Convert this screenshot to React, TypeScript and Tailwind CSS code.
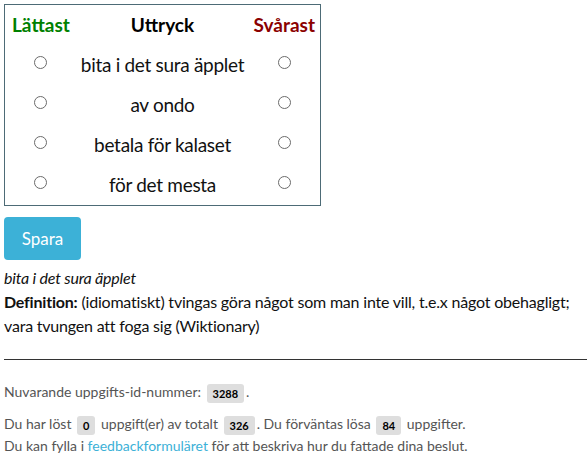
import React from 'react';

const rows = ['bita i det sura äpplet', 'av ondo', 'betala för kalaset', 'för det mesta'];

function Radio() {
  return (
    <span className="inline-block h-[13px] w-[13px] rounded-full border border-[#6b6b6b] bg-white" />
  );
}

function Code({ children }: { children: React.ReactNode }) {
  return (
    <code className="mx-[2px] inline-block rounded-[3px] bg-[#dedede] px-[6px] py-[3px] align-middle font-['Lato'] text-[11px] font-bold leading-[13px] text-black">
      {children}
    </code>
  );
}

export default function App() {
  return (
    <div className="min-h-screen bg-white p-[4px] pr-0 font-['Lato',sans-serif] text-[16px] text-[#111]">
      <div className="w-[317px] border border-[#4d6b76]">
        <div className="grid h-[40px] grid-cols-[74px_1fr_74px] items-center text-[19px] font-bold">
          <span className="pl-[7px] text-[#008000]">Lättast</span>
          <span className="text-center text-black">Uttryck</span>
          <span className="pr-[5px] text-right text-[#8b0000]">Svårast</span>
        </div>
        {rows.map((r) => (
          <div key={r} className="grid h-[40px] grid-cols-[74px_1fr_74px] items-center text-[19px] tracking-[-0.3px]">
            <span className="flex justify-center pr-[3px] pb-[5px]">
              <Radio />
            </span>
            <span className="whitespace-nowrap text-center">{r}</span>
            <span className="flex justify-center pl-[3px] pb-[5px]">
              <Radio />
            </span>
          </div>
        ))}
      </div>

      <button className="mt-[11px] h-[43px] w-[77px] rounded-[4px] bg-[#3cb1d7] text-[17px] text-white">
        Spara
      </button>

      <div className="mt-[6px] pr-[4px] leading-[24px] tracking-[-0.2px]">
        <p className="italic">bita i det sura äpplet</p>
        <p>
          <b>Definition:</b> (idiomatiskt) tvingas göra något som man inte vill, t.e.x något obehagligt; vara tvungen att foga sig (Wiktionary)
        </p>
      </div>

      <hr className="mt-[21px] border-t border-[#333]" />

      <div className="mt-[21px] text-[14px] leading-[21px] text-[#555]">
        <p>
          Nuvarande uppgifts-id-nummer: <Code>3288</Code>.
        </p>
        <p className="mt-[10px]">
          Du har löst <Code>0</Code> uppgift(er) av totalt <Code>326</Code>. Du förväntas lösa <Code>84</Code> uppgifter.
        </p>
        <p>
          Du kan fylla i <a className="text-[#3cb1d7]">feedbackformuläret</a> för att beskriva hur du fattade dina beslut.
        </p>
      </div>
    </div>
  );
}
